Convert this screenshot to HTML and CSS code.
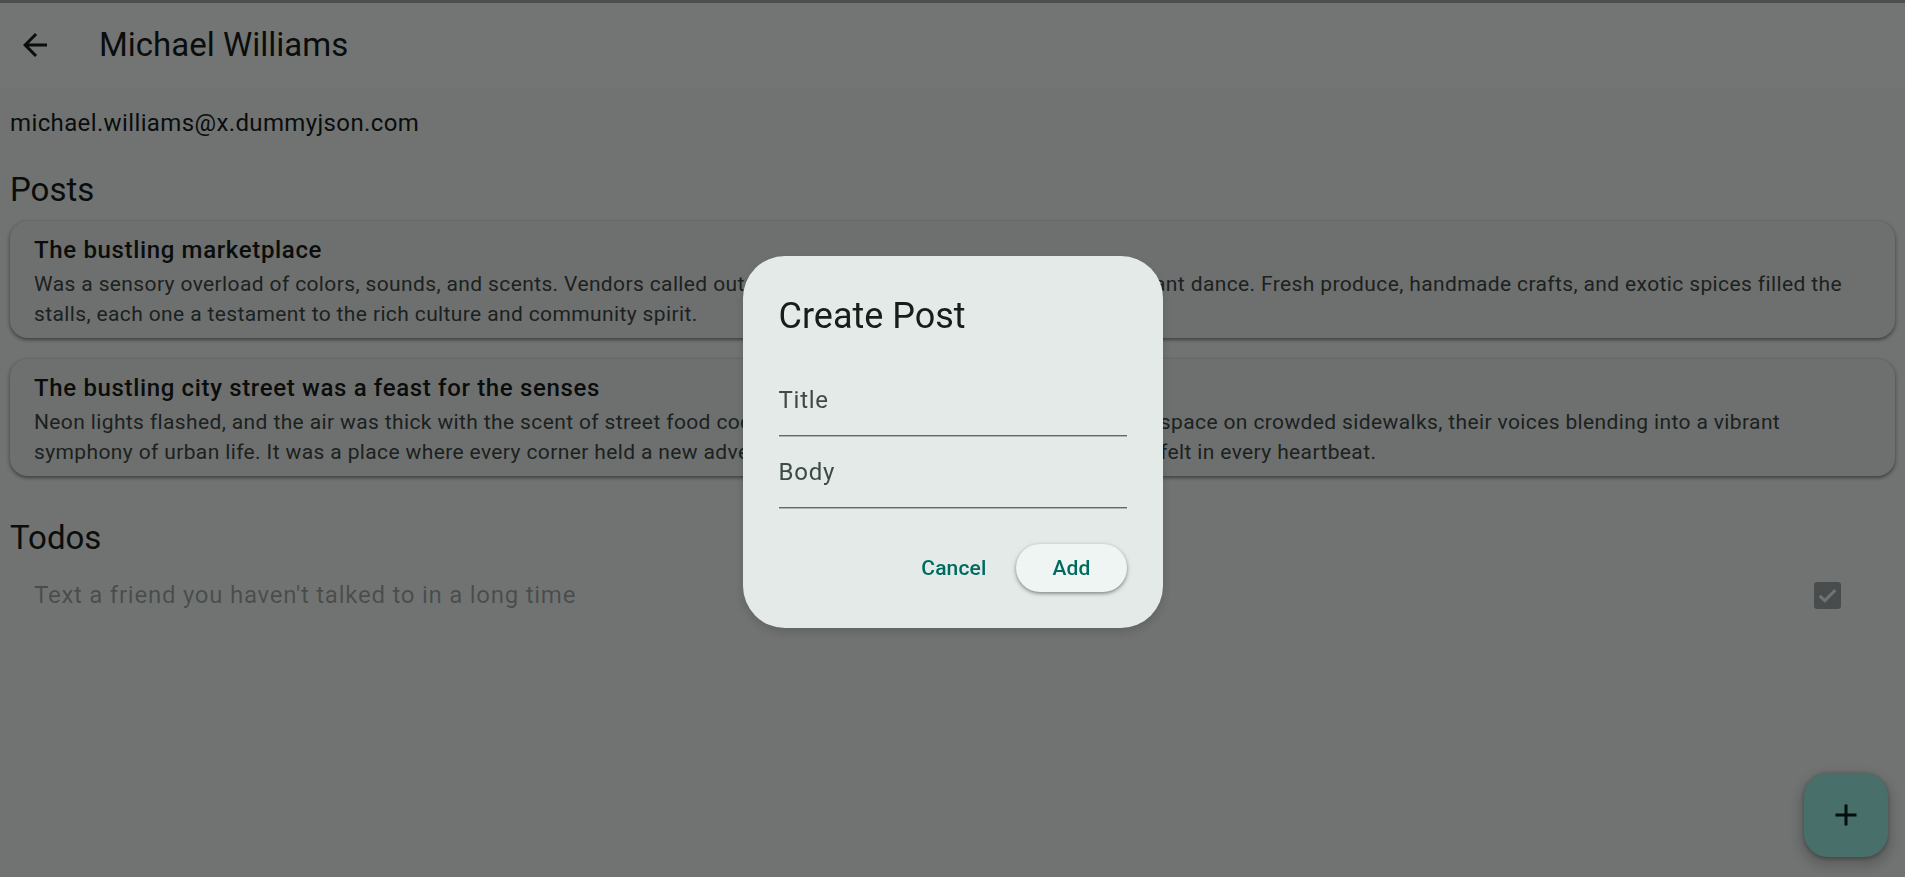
FILE: index.html
```html
<!DOCTYPE html>
<html lang="en">
<head>
<meta charset="utf-8">
<title>Michael Williams</title>
<link rel="stylesheet" href="styles.css">
</head>
<body>
<div class="topline"></div>
<div class="app">
  <header class="appbar">
    <div class="leading">
      <svg class="icon" viewBox="0 0 24 24" width="36" height="36"><path d="M20 11H7.83l5.59-5.59L12 4l-8 8 8 8 1.41-1.41L7.83 13H20v-2z"/></svg>
    </div>
    <h1 class="appbar-title">Michael Williams</h1>
  </header>
  <main class="content">
    <div class="email">michael.williams@x.dummyjson.com</div>
    <h2 class="section-title posts-title">Posts</h2>
    <article class="card">
      <div class="card-title">The bustling marketplace</div>
      <div class="card-body">Was a sensory overload of colors, sounds, and scents. Vendors called out their wares, their voices, mingling in a vibrant dance. Fresh produce, handmade crafts, and exotic spices filled the stalls, each one a testament to the rich culture and community spirit.</div>
    </article>
    <article class="card card-second">
      <div class="card-title">The bustling city street was a feast for the senses</div>
      <div class="card-body">Neon lights flashed, and the air was thick with the scent of street food cooking over sizzling grills. People jostled for space on crowded sidewalks, their voices blending into a vibrant symphony of urban life. It was a place where every corner held a new adventure, and the energy of the great city was felt in every heartbeat.</div>
    </article>
    <h2 class="section-title todos-title">Todos</h2>
    <div class="todo">
      <span class="todo-text">Text a friend you haven't talked to in a long time</span>
      <span class="checkbox">
        <svg viewBox="0 0 18 18" width="27" height="27"><polyline points="3.8,9.2 7.2,12.4 14.2,5.4" fill="none" stroke="#F4FBF8" stroke-width="2"/></svg>
      </span>
    </div>
  </main>
  <button class="fab" aria-label="Add">
    <svg viewBox="0 0 24 24" width="36" height="36"><path d="M19 13h-6v6h-2v-6H5v-2h6V5h2v6h6v2z"/></svg>
  </button>
</div>
<div class="barrier">
  <div class="dialog" role="dialog">
    <h3 class="dialog-title">Create Post</h3>
    <div class="field"><span class="field-label">Title</span></div>
    <div class="field"><span class="field-label">Body</span></div>
    <div class="actions">
      <button class="btn btn-text">Cancel</button>
      <button class="btn btn-elevated">Add</button>
    </div>
  </div>
</div>
</body>
</html>
```
FILE: styles.css
```css
html, body {
  margin: 0;
  padding: 0;
}
body {
  font-family: "Roboto", "Noto Sans", sans-serif;
  background: #F4FBF8;
  color: #161D1C;
  width: 1905px;
  height: 877px;
  overflow: hidden;
}
.topline {
  height: 3px;
  background: #aaaaaa;
}
.app {
  height: 874px;
  display: flex;
  flex-direction: column;
}
.appbar {
  height: 84px;
  flex: none;
  display: flex;
  align-items: center;
  background: #F9FFFD;
}
.leading {
  width: 69px;
  display: flex;
  justify-content: center;
  align-items: center;
}
.icon {
  fill: #161D1C;
}
.appbar-title {
  margin: 0 0 0 30px;
  font-size: 33px;
  line-height: 40px;
  font-weight: 400;
  color: #161D1C;
}
.content {
  padding: 18px 10px 0;
}
.email {
  font-size: 24px;
  line-height: 36px;
  letter-spacing: 0.375px;
}
.section-title {
  margin: 0;
  font-size: 33px;
  line-height: 42px;
  font-weight: 400;
}
.posts-title {
  margin-top: 28px;
}
.card {
  margin-top: 10px;
  background: #EEF5F2;
  border-radius: 18px;
  padding: 11px 24px 9px;
  box-shadow: 0 1.5px 3px rgba(0,0,0,0.3), 0 1.5px 4.5px 1.5px rgba(0,0,0,0.12);
}
.card-second {
  margin-top: 21px;
}
.card-title {
  font-size: 24px;
  line-height: 36px;
  font-weight: 500;
  letter-spacing: 0.65px;
  color: #161D1C;
}
.card-body {
  margin-top: 1px;
  font-size: 21px;
  line-height: 30px;
  letter-spacing: 0.375px;
  color: #3F4947;
}
.todos-title {
  margin-top: 41px;
}
.todo {
  height: 72px;
  display: flex;
  align-items: center;
  justify-content: space-between;
  padding: 0 24px;
}
.todo-text {
  font-size: 24px;
  line-height: 36px;
  letter-spacing: 0.75px;
  color: rgba(22,29,28,0.38);
}
.checkbox {
  width: 27px;
  height: 27px;
  border-radius: 3px;
  background: rgba(22,29,28,0.38);
  margin-right: 30px;
  display: flex;
}
.fab {
  position: fixed;
  right: 17px;
  bottom: 20px;
  width: 84px;
  height: 84px;
  border: none;
  border-radius: 24px;
  background: #9EF2E4;
  display: flex;
  align-items: center;
  justify-content: center;
  padding: 0;
  fill: #00201C;
  box-shadow: 0 1.5px 4.5px rgba(0,0,0,0.3), 0 6px 12px 4.5px rgba(0,0,0,0.15);
}
.barrier {
  position: fixed;
  inset: 0;
  background: rgba(0,0,0,0.541);
  display: flex;
  justify-content: center;
  align-items: center;
  padding-top: 7px;
  box-sizing: border-box;
}
.dialog {
  width: 420px;
  box-sizing: border-box;
  padding: 36px;
  border-radius: 42px;
  background: #E3EAE7;
  box-shadow: 0 4px 12px rgba(0,0,0,0.15);
}
.dialog-title {
  margin: 0 0 24px;
  font-size: 36px;
  line-height: 48px;
  font-weight: 400;
  color: #161D1C;
}
.field {
  height: 72px;
  box-sizing: border-box;
  padding-top: 18px;
  border-bottom: 1px solid #5f6866;
  box-shadow: 0 1px 0 rgba(111,121,119,0.45);
}
.field-label {
  display: block;
  font-size: 24px;
  line-height: 36px;
  letter-spacing: 0.75px;
  color: #3F4947;
}
.actions {
  margin-top: 36px;
  display: flex;
  justify-content: flex-end;
  gap: 12px;
}
.btn {
  height: 48px;
  border: none;
  border-radius: 24px;
  font-family: "Roboto", "Noto Sans", sans-serif;
  font-size: 21px;
  font-weight: 500;
  letter-spacing: 0.15px;
  color: #006A60;
  cursor: pointer;
}
.btn-text {
  padding: 0 18px;
  background: transparent;
}
.btn-elevated {
  padding: 0 36px;
  background: #EEF5F2;
  box-shadow: 0 1.5px 3px rgba(0,0,0,0.3), 0 1.5px 4.5px 1.5px rgba(0,0,0,0.12);
}
```
